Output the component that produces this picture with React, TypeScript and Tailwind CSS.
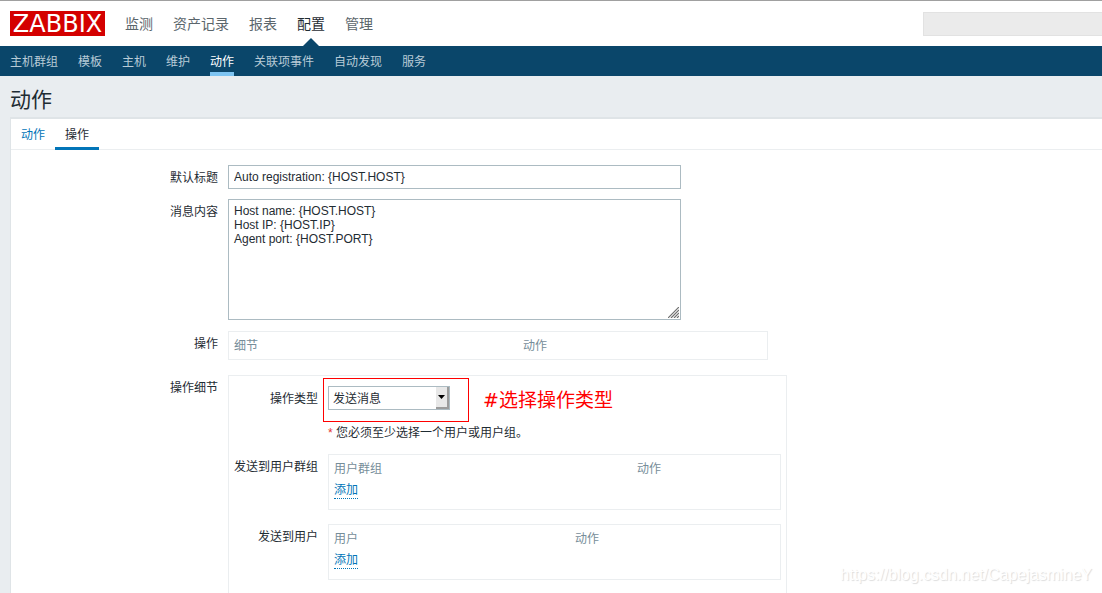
import type { ReactNode } from "react";

const mainNav = ["监测", "资产记录", "报表", "配置", "管理"];
const subNav = ["主机群组", "模板", "主机", "维护", "动作", "关联项事件", "自动发现", "服务"];

const message = "Host name: {HOST.HOST}\nHost IP: {HOST.IP}\nAgent port: {HOST.PORT}";

function Row({
  label,
  htmlFor,
  inner = false,
  className = "",
  children,
}: {
  label: string;
  htmlFor?: string;
  inner?: boolean;
  className?: string;
  children: ReactNode;
}) {
  const labelClass = `${inner ? "w-[89px]" : "w-[207px]"} shrink-0 pt-[6px] text-right leading-[14px]`;
  return (
    <div className={`flex gap-[10px] ${className}`}>
      {htmlFor ? (
        <label htmlFor={htmlFor} className={labelClass}>
          {label}
        </label>
      ) : (
        <div className={labelClass}>{label}</div>
      )}
      {children}
    </div>
  );
}

function RecipientTable({ head, firstCol }: { head: string; firstCol: string }) {
  return (
    <div className="h-14 w-[453px] border border-[#ebeef0] px-[5px] pt-[3px]">
      <table className="w-full table-fixed text-left">
        <thead>
          <tr className="h-[22px] text-[#768d99]">
            <th className={`${firstCol} font-normal`}>{head}</th>
            <th className="font-normal">动作</th>
          </tr>
        </thead>
        <tbody>
          <tr className="h-[22px]">
            <td colSpan={2}>
              <button
                type="button"
                className="block border-b border-dotted border-[#0275b8] leading-[15px] text-[#0275b8]"
              >
                添加
              </button>
            </td>
          </tr>
        </tbody>
      </table>
    </div>
  );
}

export default function App() {
  return (
    <div className="relative flex min-h-screen flex-col bg-[#e9edf0] font-['Liberation_Sans','Noto_Sans_CJK_SC',sans-serif] text-[12px] leading-[14px] text-[#1f2c33]">
      <header className="flex h-[46px] items-center border-t border-[#a0a0a0] bg-white pl-[10px]">
        <a
          href="#home"
          className="flex h-[25px] w-[95px] shrink-0 items-center justify-center bg-[#d40000] font-['DejaVu_Sans',sans-serif] text-[24px] leading-[24px] text-white"
        >
          ZABBIX
        </a>
        <nav className="ml-5 flex h-full gap-5 text-[14px]">
          {mainNav.map((item) => (
            <a
              key={item}
              href="#menu"
              className={`relative flex h-full shrink-0 items-center ${
                item === "配置" ? "text-[#1f2c33]" : "text-[#5b666c]"
              }`}
            >
              {item}
              {item === "配置" && (
                <svg
                  className="absolute bottom-0 left-1/2 -translate-x-1/2"
                  width="16"
                  height="8"
                  viewBox="0 0 16 8"
                  aria-hidden="true"
                >
                  <path d="M0 8 8 0l8 8z" fill="#0a466a" />
                </svg>
              )}
            </a>
          ))}
        </nav>
        <input
          type="search"
          aria-label="搜索"
          className="ml-auto h-6 w-[179px] border border-r-0 border-[#e2e2e2] bg-[#ebebeb] px-1 outline-none"
        />
      </header>

      <nav className="flex h-[30px] gap-5 bg-[#0a466a] pl-[10px]">
        {subNav.map((item) => (
          <a
            key={item}
            href="#submenu"
            className={`flex shrink-0 items-center border-b-4 pt-[6px] ${
              item === "动作" ? "border-b-[#7dc4f2] text-white" : "border-b-transparent text-[#b8cbd7]"
            }`}
          >
            {item}
          </a>
        ))}
      </nav>

      <h1 className="flex h-[41px] items-center pt-[6px] pl-[10px] text-[21px] leading-[24px]">动作</h1>

      <main className="ml-[10px] flex flex-1 flex-col border-t-2 border-l border-[#dfe4e7] bg-white">
        <div className="flex h-[31px] border-b border-[#ebeef0]">
          <button type="button" className="-mb-px border-y-[3px] border-transparent px-[10px] text-[#0275b8]">
            动作
          </button>
          <button type="button" className="-mb-px border-y-[3px] border-t-transparent border-b-[#0275b8] px-[10px]">
            操作
          </button>
        </div>

        <form className="flex flex-1 flex-col pt-[15px]">
          <Row label="默认标题" htmlFor="subject">
            <input
              id="subject"
              type="text"
              defaultValue="Auto registration: {HOST.HOST}"
              className="h-6 w-[453px] border border-[#acbbc2] bg-white px-[5px] outline-none"
            />
          </Row>

          <Row label="消息内容" htmlFor="message" className="mt-[10px]">
            <div className="relative">
              <textarea
                id="message"
                defaultValue={message}
                className="block h-[121px] w-[453px] resize-none border border-[#acbbc2] bg-white px-[5px] py-[4px] leading-[14px] outline-none"
              />
              <svg
                className="absolute right-[2px] bottom-[2px]"
                width="11"
                height="11"
                viewBox="0 0 11 11"
                aria-hidden="true"
              >
                <path d="M0 11 11 0M3 11l8-8M6 11l5-5M9 11l2-2" stroke="#6f6f6f" strokeWidth="1.2" />
              </svg>
            </div>
          </Row>

          <Row label="操作" className="mt-[11px]">
            <div className="h-[29px] w-[540px] border border-[#ebeef0] px-[5px]">
              <table className="w-full table-fixed text-left text-[#768d99]">
                <thead>
                  <tr className="h-[28px]">
                    <th className="w-[289px] font-normal">细节</th>
                    <th className="font-normal">动作</th>
                  </tr>
                </thead>
              </table>
            </div>
          </Row>

          <Row label="操作细节" className="mt-[15px] flex-1">
            <div className="w-[559px] border border-b-0 border-[#ebeef0] pt-[10px]">
              <Row label="操作类型" htmlFor="type" inner>
                <div className="relative">
                  <select
                    id="type"
                    className="block h-6 w-[122px] appearance-none border border-[#acbbc2] bg-white pt-[2px] pr-4 pl-1 outline-none"
                  >
                    <option>发送消息</option>
                  </select>
                  <span className="pointer-events-none absolute top-px right-px flex h-[22px] w-[13px] items-center justify-center border-r-2 border-b-2 border-[#9c9c9c] bg-[#e8e8e8]">
                    <svg width="7" height="4" viewBox="0 0 7 4" aria-hidden="true">
                      <path d="M0 0h7L3.500 4z" fill="#000" />
                    </svg>
                  </span>
                  <div className="pointer-events-none absolute -top-2 -left-[5px] h-11 w-[146px] border border-[#ff0000]" />
                  <p className="absolute top-px left-[155px] font-['DejaVu_Sans','Noto_Sans_CJK_SC',sans-serif] text-[19px] leading-[26px] whitespace-nowrap text-[#ff0000]">
                    #选择操作类型
                  </p>
                </div>
              </Row>
              <p className="mt-[16px] pl-[99px]">
                <span className="text-[#e33734]">*</span> 您必须至少选择一个用户或用户组。
              </p>
              <Row label="发送到用户群组" inner className="mt-[14px]">
                <RecipientTable head="用户群组" firstCol="w-[303px]" />
              </Row>
              <Row label="发送到用户" inner className="mt-[14px]">
                <RecipientTable head="用户" firstCol="w-[241px]" />
              </Row>
            </div>
          </Row>
        </form>
      </main>

      <div className="pointer-events-none absolute right-[10px] bottom-[9px] text-[16px] leading-[18px] text-white [text-shadow:1px_1px_1px_#dcdcdc]">
        https://blog.csdn.net/CapejasmineY
      </div>
    </div>
  );
}
